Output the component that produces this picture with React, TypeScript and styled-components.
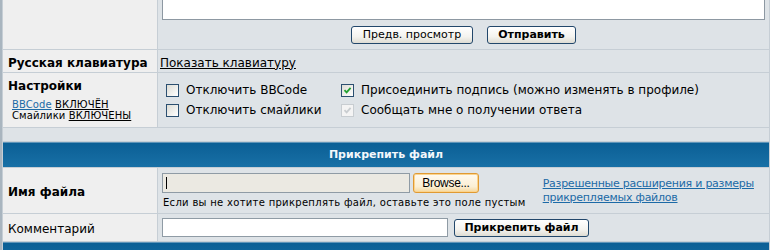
import styled, { createGlobalStyle } from "styled-components";

const GlobalStyle = createGlobalStyle`
  body {
    margin: 0;
    background: #dee3e7;
    font-family: "DejaVu Sans", Verdana, sans-serif;
    overflow: hidden;
  }
`;

const Page = styled.div`
  margin-top: -100px;
`;

const Table = styled.table`
  width: 100%;
  border-collapse: separate;
  border-spacing: 1px;
  background: #c6ced5;
  border-left: 2px solid #a9b5bf;
`;

const LabelCell = styled.td<{ $h?: number }>`
  width: 154px;
  background: #efefef;
  padding: 0 0 0 5px;
  box-sizing: border-box;
  height: ${(p) => (p.$h ? `${p.$h}px` : "auto")};
  vertical-align: middle;
`;

const FieldCell = styled.td<{ $pad?: string }>`
  background: #dee3e7;
  padding: ${(p) => p.$pad ?? "0 4px"};
  vertical-align: middle;
`;

const SpacerCell = styled.td`
  background: #dee3e7;
  height: 13px;
  padding: 0;
`;

const HeadCell = styled.td<{ $h: number }>`
  height: ${(p) => p.$h}px;
  padding: 0;
  background: linear-gradient(#5f95b9 0, #5f95b9 1px, #0b5f95 1px, #1870a6 100%);
  color: #f3f7fb;
  font-weight: bold;
  font-size: 11px;
  text-align: center;
  vertical-align: middle;
`;

const TextArea = styled.textarea`
  display: block;
  width: 603px;
  height: 119px;
  box-sizing: border-box;
  border: 1px solid #8d98a2;
  background: #fff;
  resize: none;
  margin: 0;
`;

const ButtonRow = styled.div`
  display: flex;
  justify-content: center;
  gap: 14px;
  margin: 6px 0 5px;
`;

const Button = styled.button<{ $bold?: boolean; $w: number }>`
  width: ${(p) => p.$w}px;
  height: 18px;
  padding: 0;
  border: 1px solid #22476b;
  border-radius: 3px;
  background: linear-gradient(#ffffff, #f4f3ef 60%, #dedcd3);
  font-family: "DejaVu Sans", Verdana, sans-serif;
  font-size: 11px;
  font-weight: ${(p) => (p.$bold ? "bold" : "normal")};
  color: #000;
  line-height: 16px;
`;

const Title = styled.span`
  font-size: 12px;
  font-weight: bold;
  color: #000;
`;

const Plain = styled.span`
  font-size: 12px;
  color: #000;
`;

const DarkLink = styled.a`
  font-size: 12px;
  color: #000;
  text-decoration: underline;
  margin-left: -2px;
`;

const Small = styled.div`
  font-size: 10px;
  color: #000;
  line-height: 11px;
  padding-left: 4px;
  letter-spacing: 0.1px;
`;

const SmallLink = styled.a<{ $blue?: boolean }>`
  color: ${(p) => (p.$blue ? "#1c6aa6" : "#000")};
  text-decoration: underline;
`;

const SettingsTitle = styled(Title)`
  display: block;
  margin: 0 0 6px;
  line-height: 14px;
`;

const Options = styled.div`
  display: grid;
  grid-template-columns: 175px auto;
  row-gap: 6px;
  padding-left: 4px;
`;

const Option = styled.label`
  display: flex;
  align-items: center;
  gap: 7px;
  font-size: 12px;
  color: #000;
  line-height: 14px;
`;

const Box = styled.span<{ $disabled?: boolean }>`
  width: 11px;
  height: 11px;
  border: 1px solid ${(p) => (p.$disabled ? "#c8cdd1" : "#2b4f70")};
  background: ${(p) =>
    p.$disabled ? "#f4f4f4" : "linear-gradient(135deg, #dcdcd5, #ffffff)"};
  display: inline-flex;
  align-items: center;
  justify-content: center;
  flex: none;
`;

const FileRow = styled.div`
  display: flex;
  align-items: center;
  gap: 17px;
`;

const FileCol = styled.div`
  display: flex;
  flex-direction: column;
  gap: 4px;
`;

const FileLine = styled.div`
  display: flex;
  gap: 3px;
`;

const FileField = styled.div`
  width: 248px;
  height: 20px;
  box-sizing: border-box;
  border: 1px solid #8f9ba5;
  background: #ebe9e2;
  position: relative;
  &::after {
    content: "";
    position: absolute;
    left: 3px;
    top: 3px;
    width: 1px;
    height: 12px;
    background: #000;
  }
`;

const Browse = styled.button`
  width: 66px;
  height: 20px;
  padding: 0;
  border: 1px solid #e09a33;
  border-radius: 3px;
  background: linear-gradient(#fffaf0, #fbefd4 70%, #f5d79c);
  font-family: "Liberation Sans", Arial, sans-serif;
  font-size: 12px;
  letter-spacing: -0.3px;
  color: #000;
  box-shadow: inset 0 0 0 1px #fbd48e;
`;

const Hint = styled.div`
  font-size: 10px;
  color: #000;
  padding-left: 1px;
  letter-spacing: 0.3px;
`;

const InfoLink = styled.a`
  font-size: 11px;
  line-height: 14px;
  color: #1c6aa6;
  text-decoration: underline;
  letter-spacing: -0.25px;
`;

const CommentLine = styled.div`
  display: flex;
  align-items: center;
  gap: 6px;
`;

const CommentInput = styled.input`
  width: 286px;
  height: 19px;
  box-sizing: border-box;
  border: 1px solid #8f9ba5;
  background: #fff;
  margin: 0;
`;

const Check = ({ checked, disabled }: { checked?: boolean; disabled?: boolean }) => (
  <Box $disabled={disabled}>
    {checked && (
      <svg width="9" height="9" viewBox="0 0 9 9">
        <path
          d="M1.5 4.2 L3.6 6.4 L7.6 1.8"
          fill="none"
          stroke={disabled ? "#c9cdd0" : "#22a130"}
          strokeWidth="1.8"
        />
      </svg>
    )}
  </Box>
);

export default function App() {
  return (
    <Page>
      <GlobalStyle />
      <Table>
        <tbody>
          <tr>
            <LabelCell />
            <FieldCell $pad="0 4px">
              <TextArea defaultValue="" />
              <ButtonRow>
                <Button $w={122}>Предв. просмотр</Button>
                <Button $w={89} $bold>
                  Отправить
                </Button>
              </ButtonRow>
            </FieldCell>
          </tr>
          <tr>
            <LabelCell $h={22}>
              <Title>Русская клавиатура</Title>
            </LabelCell>
            <FieldCell>
              <DarkLink href="#">Показать клавиатуру</DarkLink>
            </FieldCell>
          </tr>
          <tr>
            <LabelCell $h={54}>
              <SettingsTitle>Настройки</SettingsTitle>
              <Small>
                <SmallLink $blue href="#">BBCode</SmallLink>{" "}
                <SmallLink href="#">ВКЛЮЧЁН</SmallLink>
                <br />
                Смайлики <SmallLink href="#">ВКЛЮЧЕНЫ</SmallLink>
              </Small>
            </LabelCell>
            <FieldCell>
              <Options>
                <Option>
                  <Check />
                  Отключить BBCode
                </Option>
                <Option>
                  <Check checked />
                  Присоединить подпись (можно изменять в профиле)
                </Option>
                <Option>
                  <Check />
                  Отключить смайлики
                </Option>
                <Option>
                  <Check checked disabled />
                  Сообщать мне о получении ответа
                </Option>
              </Options>
            </FieldCell>
          </tr>
          <tr>
            <SpacerCell colSpan={2} />
          </tr>
          <tr>
            <HeadCell colSpan={2} $h={25}>
              Прикрепить файл
            </HeadCell>
          </tr>
          <tr>
            <LabelCell $h={45}>
              <Title>Имя файла</Title>
            </LabelCell>
            <FieldCell>
              <FileRow>
                <FileCol>
                  <FileLine>
                    <FileField />
                    <Browse>Browse...</Browse>
                  </FileLine>
                  <Hint>Если вы не хотите прикреплять файл, оставьте это поле пустым</Hint>
                </FileCol>
                <InfoLink href="#">
                  Разрешенные расширения и размеры
                  <br />
                  прикрепляемых файлов
                </InfoLink>
              </FileRow>
            </FieldCell>
          </tr>
          <tr>
            <LabelCell $h={27}>
              <Plain>Комментарий</Plain>
            </LabelCell>
            <FieldCell>
              <CommentLine>
                <CommentInput />
                <Button $w={135} $bold>
                  Прикрепить файл
                </Button>
              </CommentLine>
            </FieldCell>
          </tr>
          <tr>
            <HeadCell colSpan={2} $h={26}>
              &nbsp;
            </HeadCell>
          </tr>
        </tbody>
      </Table>
    </Page>
  );
}
